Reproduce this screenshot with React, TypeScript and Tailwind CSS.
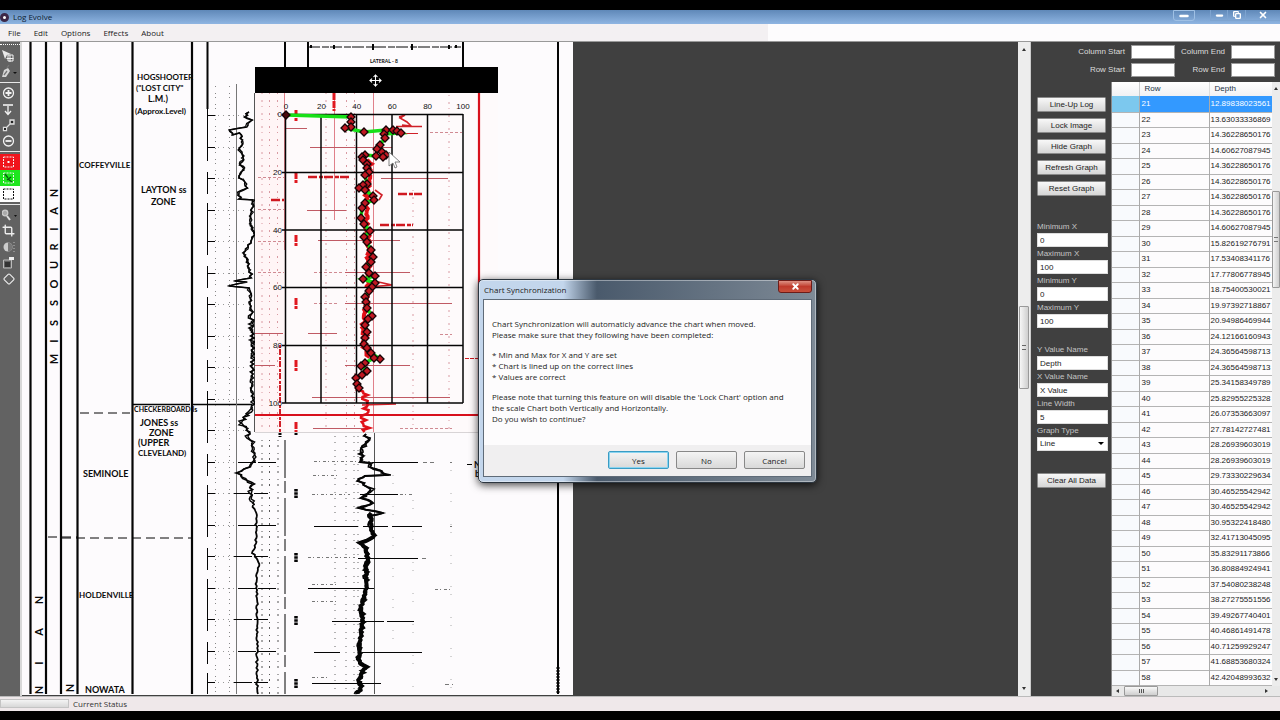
import React from "react";
import { Copy, Crop, Diamond, Minus, Move, X } from "lucide-react";

type Point = [number, number];

const DEPTHS = [
  "12.89838023561", "13.63033336869", "14.36228650176", "14.60627087945", "14.36228650176",
  "14.36228650176", "14.36228650176", "14.36228650176", "14.60627087945", "15.82619276791",
  "17.53408341176", "17.77806778945", "18.75400530021", "19.97392718867", "20.94986469944",
  "24.12166160943", "24.36564598713", "24.36564598713", "25.34158349789", "25.82955225328",
  "26.07353663097", "27.78142727481", "28.26939603019", "28.26939603019", "29.73330229634",
  "30.46525542942", "30.46525542942", "30.95322418480", "32.41713045095", "35.83291173866",
  "36.80884924941", "37.54080238248", "38.27275551556", "39.49267740401", "40.46861491478",
  "40.71259929247", "41.68853680324", "42.42048993632"
];

const GRAPH_POINTS: Point[] = [
  [286, 115], [351, 117], [351, 122], [351, 127], [345, 128], [364, 132], [386, 130], [393, 130],
  [397, 131], [401, 133], [384, 134], [385, 138], [380, 145], [377, 149], [382, 152], [386, 155],
  [383, 157], [376, 156], [365, 155], [362, 157], [363, 160], [367, 164], [367, 168], [369, 172],
  [365, 175], [367, 184], [363, 185], [359, 188], [365, 190], [373, 196], [374, 200], [365, 203],
  [362, 208], [361, 218], [364, 224], [370, 231], [364, 237], [367, 242], [371, 250], [373, 257],
  [371, 262], [366, 267], [369, 273], [375, 276], [363, 279], [375, 283], [372, 287], [369, 291],
  [365, 297], [366, 302], [367, 308], [372, 316], [368, 319], [365, 325], [367, 332], [365, 338],
  [364, 344], [367, 348], [371, 353], [380, 359], [374, 358], [365, 363], [361, 366], [367, 371],
  [362, 375], [356, 378], [357, 384], [359, 388]
];

const LEFT_LOG: Point[] = [
  [249, 112], [245, 117], [251, 120], [246, 127], [229, 130], [233, 135], [240, 133], [242, 140],
  [240, 150], [243, 158], [240, 165], [245, 168], [238, 178], [243, 180], [248, 188], [239, 192],
  [240, 199], [253, 200], [252, 210], [250, 222], [254, 235], [244, 253], [247, 260], [250, 270],
  [251, 278], [235, 281], [247, 282], [228, 286], [248, 288], [252, 300]
];

const LEFT_LOG_DENSE: Point[] = [
  [252, 300], [251, 320], [253, 350], [252, 380], [253, 400], [252, 410], [240, 423], [250, 432],
  [246, 436], [252, 442], [254, 455], [252, 465], [236, 473], [252, 484], [250, 495], [253, 505]
];

const LEFT_LOG_TAIL: Point[] = [
  [253, 505], [256, 515], [256, 540], [253, 553], [259, 562], [256, 580], [257, 600], [257, 694]
];

const RIGHT_LOG_TOP: Point[] = [
  [366, 434], [368, 440], [361, 450], [362, 462], [370, 463], [371, 467], [388, 475], [365, 476],
  [358, 479], [364, 485], [372, 489], [362, 498], [373, 503], [359, 508], [382, 513], [371, 516]
];

const RIGHT_LOG_BOTTOM: Point[] = [
  [371, 513], [371, 530], [374, 537], [361, 543], [366, 548], [368, 560], [366, 570], [366, 590],
  [361, 608], [363, 620], [360, 640], [359, 663], [366, 667], [358, 680], [361, 688], [357, 694]
];

const SCAN_LABELS = [
  { text: "HOGSHOOTER", x: 137, y: 80 },
  { text: "(\"LOST CITY\"", x: 136, y: 91 },
  { text: "L.M.)", x: 148, y: 102 },
  { text: "(Approx.Level)", x: 135, y: 114 },
  { text: "COFFEYVILLE", x: 79, y: 168 },
  { text: "LAYTON ss", x: 141, y: 193 },
  { text: "ZONE", x: 151, y: 205 },
  { text: "JONES ss", x: 140, y: 426 },
  { text: "ZONE", x: 149, y: 436 },
  { text: "(UPPER", x: 138, y: 446 },
  { text: "CLEVELAND)", x: 138, y: 456 },
  { text: "SEMINOLE", x: 83, y: 477 },
  { text: "HOLDENVILLE", x: 79, y: 598 },
  { text: "NOWATA", x: 85, y: 693 }
];

const SIDE_LETTERS = [
  ..."NAIRUOSSIM".split("").map((letter, i) => ({
    letter,
    x: 58,
    y: [193, 211, 229, 247, 265, 284, 303, 323, 341, 359][i]
  })),
  ..."NAIN".split("").map((letter, i) => ({ letter, x: 43, y: [600, 632, 663, 690][i] })),
  { letter: "N", x: 74, y: 688 }
];

// Adds a repeatable wiggle between the given points, like an inked log trace
function trace(points: Point[], amount: number, seed = 7) {
  let s = seed;
  const rand = () => {
    s = (s * 16807) % 2147483647;
    return s / 2147483647 - 0.5;
  };
  let d = `M${points[0][0]} ${points[0][1]}`;
  for (let i = 1; i < points.length; i++) {
    const [x0, y0] = points[i - 1];
    const [x1, y1] = points[i];
    const steps = Math.max(1, Math.round(Math.abs(y1 - y0) / 2));
    for (let k = 1; k <= steps; k++) {
      const t = k / steps;
      const x = x0 + (x1 - x0) * t + rand() * amount;
      d += `L${x.toFixed(1)} ${(y0 + (y1 - y0) * t).toFixed(1)}`;
    }
  }
  return d;
}

function ScanPage() {
  const ticks = Array.from({ length: 19 }, (_, i) => 115 + i * 32 - Math.floor(i / 2));
  return (
    <g stroke="#050505" fill="none">
      <rect x="22" y="42" width="551" height="653" fill="#fdfbfd" stroke="none" />
      <path strokeWidth="2.2" d="M30.500 42V694M46 42V694M61 42V694M77.500 42V694M132.500 42V694M192 42V694" />
      <path strokeWidth="2" d="M207.500 42V109M558 42V694M285 42V68M308 42V68M463 42V68" />
      <path strokeWidth="1.5" d="M133 404.500H190M193 404.500H252" />
      <path strokeDasharray="9 5" d="M80 413H130M48 537H78M62 538H192" />
      <path d="M207.500 109V694" strokeDasharray="52 11 22 9" />
      <path d="M236.500 84V694" stroke="#777" />
      <path d="M254.500 93V432M374.500 432V694" stroke="#555" />
      <path d="M285 440V694" strokeDasharray="38 3 12 5" />
      <path d="M308 47H463" strokeDasharray="12 2 7 1" />
      <path d="M311 45v3M334 45v4M373 44v6M412 44v6M449 45v4M456 45v3" strokeWidth="2" />

      <path d="M215.500 86V694M229.500 86V694" stroke="#888" strokeDasharray="1 6 1 3" />
      <path d="M262 440V694M269.500 440V694M278 440V694" stroke="#555" strokeDasharray="1 4 2 6" />
      <path d="M335 436V694M346 436V694M354 436V694M358 436V694" stroke="#666" strokeDasharray="1 5 1 7" />
      <path d="M413 500V694M451 462V694M393 475V640" stroke="#aaa" strokeDasharray="1 7 1 22" />
      {ticks.map((y, i) => (
        <g key={y}>
          <path d={`M207 ${y}.5H215`} />
          <path d={`M218 ${y}.5H246`} stroke="#999" strokeDasharray="1 4" />
          {i >= 11 && <path d={i % 2 ? `M238 ${y}.5H276` : `M234 ${y}.5H268`} strokeDasharray="18 2" />}
        </g>
      ))}
      <path d="M372 462.500H418M360 494.500H398M314 526.500H358M363 526.500H388M392 526.500H422M358 558.500H418M308 588.500H374M332 621.500H384M387 621.500H414M314 652.500H340M362 652.500H422M312 683.500H381" />
      <path d="M314 461.500H370M313 475.500H340M312 494.500H350M400 494.500H414M308 557.500H355M435 589.500H453M312 584.500H336M312 601.500H336M312 677.500H330" stroke="#777" strokeDasharray="3 2 1 3" />
      <path d="M423 462.500h12M450 462.500h2M450 526.500h2M422 558.500h4M445 684.500h8" stroke="#777" strokeDasharray="4 3" />
      <path d="M485 255.500H496" stroke="#888" strokeDasharray="2 1" />

      <path strokeWidth="1.6" d={trace(LEFT_LOG, 3)} />
      <path strokeWidth="1.2" d={trace(LEFT_LOG, 4, 43)} />
      <path strokeWidth="1.5" d={trace(LEFT_LOG_DENSE, 6, 31)} />
      <path strokeWidth="1.4" d={trace(LEFT_LOG_DENSE, 4, 77)} />
      <path strokeWidth="1.8" d={trace(LEFT_LOG_TAIL, 2, 13)} />
      <path strokeWidth="2" d={trace(RIGHT_LOG_TOP, 4, 5)} />
      <path strokeWidth="1.6" d={trace(RIGHT_LOG_TOP, 6, 91)} />
      <path strokeWidth="4" d={trace(RIGHT_LOG_BOTTOM, 2, 17)} />
      <path strokeWidth="2" d={trace(RIGHT_LOG_BOTTOM, 6, 23)} />

      {[493, 557, 620, 683].map((y) => (
        <path key={y} d={`M296 ${y - 4}v9`} strokeWidth="3.500" strokeDasharray="2.500 0.700" />
      ))}
      <path d="M280 433v4M296 433v3M558 667v27" strokeWidth="3" strokeDasharray="2 1" />
      <path d="M467 464.500h5" />

      <g fill="#0a0a0a" stroke="none" fontFamily="Lato, 'Liberation Sans', sans-serif" fontSize="9" fontWeight="700">
        {SCAN_LABELS.map((l) => (
          <text key={l.text + l.y} x={l.x} y={l.y} fontSize={l.text.length > 9 ? 8 : 9}>{l.text}</text>
        ))}
        <text x="134" y="412" fontSize="7">CHECKERBOARD ls</text>
        <text x="370" y="63" fontSize="5">LATERAL - 8</text>
        <text x="474" y="468">N</text>
        <text x="475" y="477">b</text>
        {SIDE_LETTERS.map((l) => (
          <text key={`${l.x}-${l.y}`} transform={`translate(${l.x} ${l.y}) rotate(-90)`} textAnchor="middle" fontSize="11">
            {l.letter}
          </text>
        ))}
      </g>
    </g>
  );
}

function GraphOverlay() {
  const line = "M" + GRAPH_POINTS.map((p) => p.join(" ")).join("L");
  return (
    <g fill="none">
      <rect x="255" y="67" width="243" height="365" fill="#fefafb" />
      <rect x="255" y="93" width="30" height="339" fill="#fff5f6" />
      <path d="M255 432.500H498" stroke="#d8d4d6" />

      {/* tinted scan under the graph */}
      <g stroke="#b03038">
        <path stroke="#e0808a" d="M284.500 93V250M334.500 93V220M373.500 93V432" />
        <path stroke="#d99aa2" strokeDasharray="1 6 2 4" d="M262 93V430M269.500 93V430M277.500 93V430M326 93V430M346.500 93V430M354.500 93V430M449 95V430M413 190V430" />
        <path stroke="#c05a64" d="M285 128.500H307M310 147.500H392M307 210.500H346M381 178.500H448M318 240.500H400M345 272.500H410M345 303.500H452M308 333.500H337M255 333.500H283M255 365.500H275M345 365.500H410M312 397.500H450M313 428.500H370" />
        <path stroke="#d08a92" strokeDasharray="3 2" d="M258 177.500H284M258 209.500H284M258 241.500H284M258 272.500H284M314 272.500H344M314 303.500H338M400 428.500H452M430 132.500H462M440 334.500H452" />
        <path stroke="#e01820" strokeWidth="3" strokeDasharray="7 1" d="M334 93V111M296 110v11M296 172v11M296 235v11M296 298v11M296 360v11M296 422v10" />
        <path stroke="#d01820" strokeWidth="2.500" strokeDasharray="9 2 4 1" d="M308 177H349M380 225H413M398 194H422M271 200H284" />
        <path stroke="#d02028" strokeWidth="1.600" d="M399 117l6 -2l-5 3l7 4l4 4l-9 -1M396 126.500H422M375 190l7 5l-3 5M368 287l24 -2l-18 -4M362 405L396 404" />
        <path stroke="#d02028" strokeWidth="1" d="M396 133.500H418" />
        <path stroke="#d02028" strokeWidth="2" strokeDasharray="3 1 6 2" d="M280 345V432" />
        <path stroke="#e01018" strokeWidth="4" d={trace([[370, 160], [369, 180], [366, 205], [366, 220], [369, 250], [368, 290], [364, 320], [365, 355], [368, 357]], 4)} />
        <path stroke="#e01018" strokeWidth="2.500" d={trace([[360, 388], [366, 395], [364, 403], [366, 412], [364, 420], [367, 432]], 8, 19)} />
        <path stroke="#d01820" strokeDasharray="4 1" d="M465 358.500H485" />
      </g>

      <path d="M479 93V415M255 415H480" stroke="#d8101c" strokeWidth="2.200" />
      <rect x="255" y="67" width="243" height="26" fill="#000" />

      <path
        stroke="#050505"
        strokeWidth="1.500"
        d="M285.500 114V403M321 114V403M356.500 114V403M392 114V403M427.500 114V403M463 114V403M282 114.500H463M282 172.500H463M282 230H463M282 287.500H463M282 345.500H463M282 403H463"
      />
      <g fill="#101010" fontFamily="'Liberation Sans', sans-serif" fontSize="8">
        {[0, 20, 40, 60, 80, 100].map((v, i) => (
          <React.Fragment key={v}>
            <text x={286 + i * 35.4} y="109" textAnchor="middle">{v}</text>
            <text x="282" y={117 + i * 57.8} textAnchor="end">{v}</text>
          </React.Fragment>
        ))}
      </g>

      <path d={line} stroke="#18e018" strokeWidth="3.500" />
      {GRAPH_POINTS.map(([x, y], i) => (
        <path key={i} d={`M${x} ${y - 4}l4 4l-4 4l-4 -4z`} fill={i === 0 ? "#4a0a0c" : "#c01822"} stroke="#160305" strokeWidth="1.300" />
      ))}
      <Move x="369" y="74" width="13" height="13" stroke="#fff" strokeWidth="2" />
      <path d="M389 152v14l4 -3l2 5l2 -1l-2 -5h5z" fill="#fff" stroke="#666" strokeWidth="0.800" />
    </g>
  );
}

function ToolButton({ label, className = "", children }: { label: string; className?: string; children: React.ReactNode }) {
  return (
    <button type="button" aria-label={label} className={`h-4 w-full flex items-center pl-[2px] ${className}`}>
      <svg viewBox="0 0 18 14" className="w-[18px] h-[14px]" fill="none" stroke="#f2f2f2" strokeWidth="1.3">
        {children}
      </svg>
    </button>
  );
}

function Separator() {
  return <div className="my-[2px] h-px bg-[#e8e8e8]" />;
}

function Toolbar() {
  return (
    <aside className="w-[22px] shrink-0 bg-[#626262] border-r-2 border-[#d8d8d8]">
      <div className="h-[6px] pt-[2px]">
        <div className="border-t border-dotted border-white" />
      </div>
      <ToolButton label="Select">
        <path d="M0 1l9 4l-4 1l-2 4z" fill="#e8e8e8" stroke="none" />
        <path d="M8 6v7M4.500 9.500h7M6 6h5v6H6z" strokeWidth="1" />
      </ToolButton>
      <ToolButton label="Pen">
        <path d="M0 12l2 -7l4 -2l2 3l-4 6z" fill="#d8d8d8" stroke="none" />
        <path d="M5 3l2 -3M2 10l3 -4" stroke="#777" />
        <path d="M11 7h4l-2 2z" fill="#111" stroke="none" />
      </ToolButton>
      <Separator />
      <ToolButton label="Add point">
        <circle cx="6.500" cy="7" r="5" />
        <path d="M6.500 4v6M3.500 7h6" strokeWidth="1.800" />
      </ToolButton>
      <ToolButton label="Move down">
        <path d="M1 3h10" strokeWidth="1.600" />
        <path d="M6 4v8M3 9l3 3.500l3 -3.500" />
      </ToolButton>
      <ToolButton label="Connect points">
        <path d="M1.500 9.500h3v3h-3zM8 2h4v4H8zM5 9l3 -3" stroke="#ddd" />
        <path d="M9 3h2v2H9zM2 10h2v2H2z" fill="#222" stroke="none" />
      </ToolButton>
      <ToolButton label="Remove point">
        <circle cx="6.500" cy="7" r="5" />
        <path d="M3.500 7h6" strokeWidth="1.800" />
      </ToolButton>
      <Separator />
      <ToolButton label="Red marker" className="bg-[#f0141c]">
        <path d="M1.500 2h10v10h-10z" strokeDasharray="2 1" strokeWidth="1" />
        <path d="M5.500 6h2v2h-2z" fill="#fff" stroke="none" />
      </ToolButton>
      <ToolButton label="Green line" className="bg-[#1ee61e]">
        <path d="M1.500 2h10v10h-10z" strokeDasharray="2 1" strokeWidth="1" />
        <path d="M3 3l3 4M5 9l4 -3M6 8l4 3" stroke="#0b5c12" />
      </ToolButton>
      <ToolButton label="Region" className="bg-white">
        <path d="M1.500 2h10v10h-10z" stroke="#111" strokeDasharray="2 1" strokeWidth="1" />
      </ToolButton>
      <Separator />
      <ToolButton label="Zoom">
        <circle cx="3" cy="5" r="2.800" fill="#aaa" stroke="#ccc" />
        <path d="M5 8l3 4" stroke="#ddd" strokeWidth="2" />
        <path d="M12 7h3l-1.500 2z" fill="#111" stroke="none" />
      </ToolButton>
      <ToolButton label="Crop">
        <Crop x="0" y="0" width="13" height="13" stroke="#eee" strokeWidth="2.500" />
      </ToolButton>
      <ToolButton label="Contrast">
        <circle cx="6" cy="7" r="4.500" fill="#ccc" stroke="none" />
        <path d="M6 2.500a4.500 4.500 0 0 1 0 9z" fill="#777" stroke="none" />
        <path d="M12 2v10" stroke="#bbb" strokeDasharray="1 2" strokeWidth="1" />
      </ToolButton>
      <ToolButton label="Adjust image">
        <path d="M1.500 4h8v8h-8z" stroke="#bbb" strokeWidth="1" />
        <path d="M3 6h5v5H3z" fill="#333" stroke="none" />
        <path d="M7 1h5v3H7z" fill="#eee" stroke="none" />
      </ToolButton>
      <ToolButton label="Erase">
        <Diamond x="1" y="1" width="12" height="12" stroke="#eee" strokeWidth="2.200" />
      </ToolButton>
    </aside>
  );
}

const PANEL_BUTTON =
  "h-[15px] w-[69px] rounded-[1px] border border-[#8a8a8a] bg-linear-to-b from-[#f8f8f8] to-[#d6d6d6] text-[8px] leading-[13px] text-[#222]";

function Field({ id, label, value }: { id: string; label: string; value: string }) {
  return (
    <div>
      <label htmlFor={id} className="block h-[13px] text-[8px] leading-[13px] text-[#c4c4c4]">{label}</label>
      <input id={id} defaultValue={value} className="block h-[14px] w-[71px] bg-white border border-[#ddd] px-[2px] text-[8px] text-[#222]" />
    </div>
  );
}

function RangeField({ id, label }: { id: string; label: string }) {
  return (
    <>
      <label htmlFor={id} className="text-right whitespace-nowrap">{label}</label>
      <input id={id} className="h-[14px] w-[44px] bg-white border border-[#999]" />
    </>
  );
}

function GraphSettings() {
  return (
    <form className="w-[80px] shrink-0 pl-[6px] pt-[15px]">
      <div className="flex flex-col gap-[6px]">
        {["Line-Up Log", "Lock Image", "Hide Graph", "Refresh Graph", "Reset Graph"].map((name) => (
          <button key={name} type="button" className={PANEL_BUTTON}>{name}</button>
        ))}
      </div>
      <div className="mt-6 flex flex-col">
        <Field id="min-x" label="Minimum X" value="0" />
        <Field id="max-x" label="Maximum X" value="100" />
        <Field id="min-y" label="Minimum Y" value="0" />
        <Field id="max-y" label="Maximum Y" value="100" />
      </div>
      <div className="mt-[15px] flex flex-col">
        <Field id="y-name" label="Y Value Name" value="Depth" />
        <Field id="x-name" label="X Value Name" value="X Value" />
        <Field id="line-width" label="Line Width" value="5" />
        <label htmlFor="graph-type" className="block h-[13px] text-[8px] leading-[13px] text-[#c4c4c4]">Graph Type</label>
        <div className="relative w-[71px]">
          <select id="graph-type" className="block h-[14px] w-full appearance-none bg-white border border-[#ddd] px-[2px] text-[8px] leading-[12px] text-[#222]">
            <option>Line</option>
          </select>
          <span className="pointer-events-none absolute right-1 top-[5px] border-x-[3px] border-t-[3px] border-x-transparent border-t-black" />
        </div>
      </div>
      <button type="button" className={`mt-[22px] ${PANEL_BUTTON}`}>Clear All Data</button>
    </form>
  );
}

function DataGrid() {
  return (
    <div className="min-w-0 flex-1 bg-[#f4f4f4] border-l border-[#888]">
      <div className="flex">
        <table className="min-w-0 flex-1 border-collapse bg-[#fdfcfd] text-[8px] leading-none text-[#222]">
          <thead>
            <tr className="h-[14px] bg-linear-to-b from-white to-[#f1f1f3]">
              <th className="w-[27px] p-0 border-r border-[#ccc]" />
              <th className="w-[70px] p-0 pl-[5px] border-r border-[#ddd] text-left font-normal text-[#234]">Row</th>
              <th className="p-0 pl-[5px] text-left font-normal text-[#234]">Depth</th>
            </tr>
          </thead>
          <tbody>
            {DEPTHS.map((depth, i) => (
              <tr
                key={i}
                className={`odd:h-[16px] even:h-[15px] border-b border-[#b4b4b4] ${i === 0 ? "bg-[#3399ff] text-white" : ""}`}
              >
                <td className={`p-0 border-r border-[#aaa] ${i === 0 ? "bg-[#7cc8ee]" : "bg-[#f8fafd]"}`} />
                <td className="p-0 border-r border-[#aaa] pl-[2px]">{21 + i}</td>
                <td className="p-0 pl-px whitespace-nowrap">{depth}</td>
              </tr>
            ))}
          </tbody>
        </table>
        <div className="w-2 shrink-0 bg-[#ececec] flex flex-col items-center justify-between py-[5px] relative">
          <span className="border-x-[2px] border-b-[3px] border-x-transparent border-b-[#333]" />
          <span className="absolute inset-x-0 top-[109px] flex h-[97px] items-center justify-center rounded-[1px] border border-[#999] bg-linear-to-r from-[#f4f4f4] to-[#cfcfcf]">
            <i className="h-[5px] w-1 border-y border-[#777]" />
          </span>
          <span className="border-x-[2px] border-t-[3px] border-x-transparent border-t-[#333]" />
        </div>
      </div>
      <div className="h-[10px] bg-[#e8e8e8] flex items-center px-1">
        <span className="border-y-[2px] border-r-[3px] border-y-transparent border-r-[#333]" />
        <span className="ml-[5px] flex h-[10px] w-[34px] items-center justify-center gap-px rounded-[1px] border border-[#999] bg-linear-to-b from-[#f8f8f8] to-[#cfcfcf]">
          <i className="h-1 w-px bg-[#555]" />
          <i className="h-1 w-px bg-[#555]" />
          <i className="h-1 w-px bg-[#555]" />
        </span>
        <span className="ml-auto mr-[8px] border-y-[2px] border-l-[3px] border-y-transparent border-l-[#333]" />
      </div>
    </div>
  );
}

function SyncDialog() {
  const button =
    "h-[18px] w-[61px] rounded-[2px] border bg-linear-to-b from-[#f4f4f4] to-[#d9d9d9] text-[8px] leading-[15px] text-[#222]";
  return (
    <div
      role="dialog"
      aria-labelledby="sync-title"
      className="absolute left-[478px] top-[237px] w-[339px] rounded-[5px] border border-[#2c3640] bg-linear-to-r from-[#c3d6ec] from-25% via-[#4a5a6c] via-35% to-[#7e8a96] px-1 pb-[5px] shadow-[0_2px_9px_rgba(0,0,0,0.75)] font-['Open_Sans',sans-serif] text-[8px] text-[#1c1c1c] ring-1 ring-inset ring-white/40"
    >
      <header className="flex h-[19px] items-start justify-between">
        <h2 id="sync-title" className="pl-px leading-[19px]">Chart Synchronization</h2>
        <button type="button" aria-label="Close" className="flex h-[13px] w-[34px] items-center justify-center rounded-b-[3px] border border-[#6c1c18] bg-linear-to-b from-[#dc9084] via-[#c03a2c] to-[#c8503c]">
          <X size={9} color="#fff" strokeWidth={5} />
        </button>
      </header>
      <div className="border border-[#5f6b78] bg-[#fdfcfd]">
        <div className="h-[145px] pl-2 pt-[18px] flex flex-col gap-[9px] leading-[11px]">
          <p>
            Chart Synchronization will automaticly advance the chart when moved.<br />
            Please make sure that they following have been completed:
          </p>
          <p>
            * Min and Max for X and Y are set<br />
            * Chart is lined up on the correct lines<br />
            * Values are correct
          </p>
          <p>
            Please note that turning this feature on will disable the 'Lock Chart' option and<br />
            the scale Chart both Vertically and Horizontally.<br />
            Do you wish to continue?
          </p>
        </div>
        <footer className="flex h-[31px] justify-end gap-[7px] bg-[#f0eff0] pr-[6px] pt-[6px]">
          <button type="button" className={`${button} border-[#3a9cc4] ring-1 ring-inset ring-[#8ad4f0]`}>Yes</button>
          <button type="button" className={`${button} border-[#888]`}>No</button>
          <button type="button" className={`${button} border-[#888]`}>Cancel</button>
        </footer>
      </div>
    </div>
  );
}

export default function App() {
  return (
    <div className="min-h-screen bg-black py-[10px] flex flex-col font-['Liberation_Sans',sans-serif]">
      <header className="h-[14px] flex items-center bg-linear-to-b from-[#5f88b8] to-[#8fb5e2] font-['Open_Sans',sans-serif] text-[8px] text-[#0c1c30]">
        <span className="size-[9px] rounded-full border-[3px] border-[#3c2848] bg-white" />
        <h1 className="pl-1 leading-[14px]">Log Evolve</h1>
        <div className="ml-auto flex h-full text-white">
          <button type="button" aria-label="Dock" className="mr-[15px] flex h-[11px] w-[22px] items-center justify-center rounded-b-[3px] border border-[#9fc0e4]">
            <Minus size={12} strokeWidth={5} />
          </button>
          <button type="button" aria-label="Minimize" className="flex h-[11px] w-[18px] items-end justify-center border border-t-0 border-[#7ea4d0]">
            <Minus size={9} strokeWidth={6} />
          </button>
          <button type="button" aria-label="Restore" className="flex h-[11px] w-[18px] items-center justify-center border-r border-b border-[#7ea4d0]">
            <Copy size={8} strokeWidth={4} />
          </button>
          <button type="button" aria-label="Close window" className="flex h-[11px] w-[34px] items-center justify-center border-b border-[#7ea4d0]">
            <X size={10} strokeWidth={4} />
          </button>
        </div>
      </header>

      <nav className="h-[18px] flex items-center gap-[13px] border-b border-[#999] bg-linear-to-r from-[#f3f0f2] from-60% to-[#fdfcfd] to-60% pl-2 font-['Open_Sans',sans-serif] text-[8px] text-[#1c1c1c]">
        {["File", "Edit", "Options", "Effects", "About"].map((item) => (
          <button key={item} type="button">{item}</button>
        ))}
      </nav>

      <main className="relative flex flex-1 bg-[#404040]">
        <Toolbar />
        <section className="min-w-0 flex-1">
          <svg viewBox="22 42 551 653" className="block w-[551px] h-[653px]">
            <ScanPage />
            <GraphOverlay />
          </svg>
        </section>
        <div className="w-[13px] shrink-0 flex flex-col items-center justify-between border-r border-[#ccc] bg-[#ededed] py-[6px] relative">
          <span className="border-x-[2px] border-b-[3px] border-x-transparent border-b-[#333]" />
          <span className="absolute inset-x-px top-[264px] flex h-[83px] items-center justify-center rounded-[1px] border border-[#999] bg-linear-to-r from-[#f6f6f6] to-[#cfcfcf]">
            <i className="h-[5px] w-1 border-y border-[#666]" />
          </span>
          <span className="border-x-[2px] border-t-[3px] border-x-transparent border-t-[#333]" />
        </div>
        <section className="w-[249px] shrink-0 flex flex-col">
          <div className="grid grid-cols-[92px_44px_44px_44px] items-center justify-end gap-x-[6px] gap-y-1 pr-[5px] pt-[3px] pb-[5px] text-[8px] text-[#dcdcdc]">
            <RangeField id="col-start" label="Column Start" />
            <RangeField id="col-end" label="Column End" />
            <RangeField id="row-start" label="Row Start" />
            <RangeField id="row-end" label="Row End" />
          </div>
          <div className="flex flex-1">
            <GraphSettings />
            <DataGrid />
          </div>
        </section>
        <SyncDialog />
      </main>

      <footer className="h-[15px] flex items-center border-t border-[#bbb] bg-[#efe8ea] font-['Open_Sans',sans-serif] text-[8px] text-[#333]">
        <div className="h-[9px] w-[69px] border border-[#c4c4c4] bg-linear-to-b from-[#f4f4f4] to-[#d8d8d8]" />
        <span className="pl-1">Current Status</span>
      </footer>
    </div>
  );
}
